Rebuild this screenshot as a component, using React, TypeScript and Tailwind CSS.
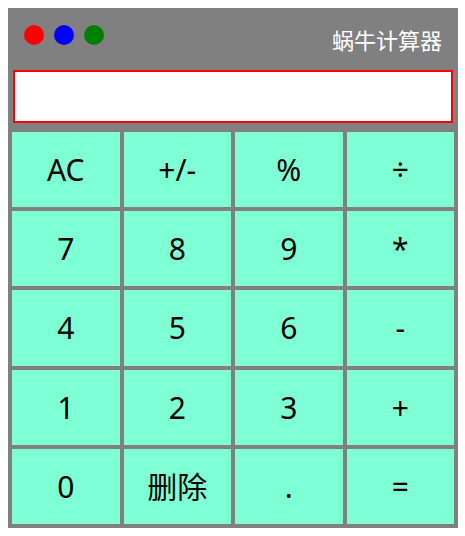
const keys = [
  "AC", "+/-", "%", "÷",
  "7", "8", "9", "*",
  "4", "5", "6", "-",
  "1", "2", "3", "+",
  "0", "删除", ".", "=",
];

export default function App() {
  return (
    <div
      className="p-2"
      style={{ fontFamily: '"Noto Sans", "Noto Sans CJK SC", sans-serif' }}
    >
      <div className="w-[450px] h-[520px] bg-[#808080] flex flex-col">
        {/* header */}
        <div className="h-[54px] flex items-center justify-between pl-4 pr-4">
          <div className="flex gap-[10px]">
            <span className="w-5 h-5 rounded-full bg-[#ff0000]" />
            <span className="w-5 h-5 rounded-full bg-[#0000ff]" />
            <span className="w-5 h-5 rounded-full bg-[#008000]" />
          </div>
          <span className="mt-[10px] text-[22px] leading-none text-white">
            蜗牛计算器
          </span>
        </div>

        {/* display */}
        <div className="mt-2 mx-[5px] h-[53px] border-2 border-[#ff0000] bg-white" />

        {/* keys */}
        <div className="mt-[9px] px-1 grid grid-cols-4 grid-rows-5 gap-1 h-[392px]">
          {keys.map((k) => (
            <div
              key={k}
              className="bg-[#7fffd4] flex items-center justify-center text-[30px] text-black"
            >
              {k}
            </div>
          ))}
        </div>
      </div>
    </div>
  );
}
